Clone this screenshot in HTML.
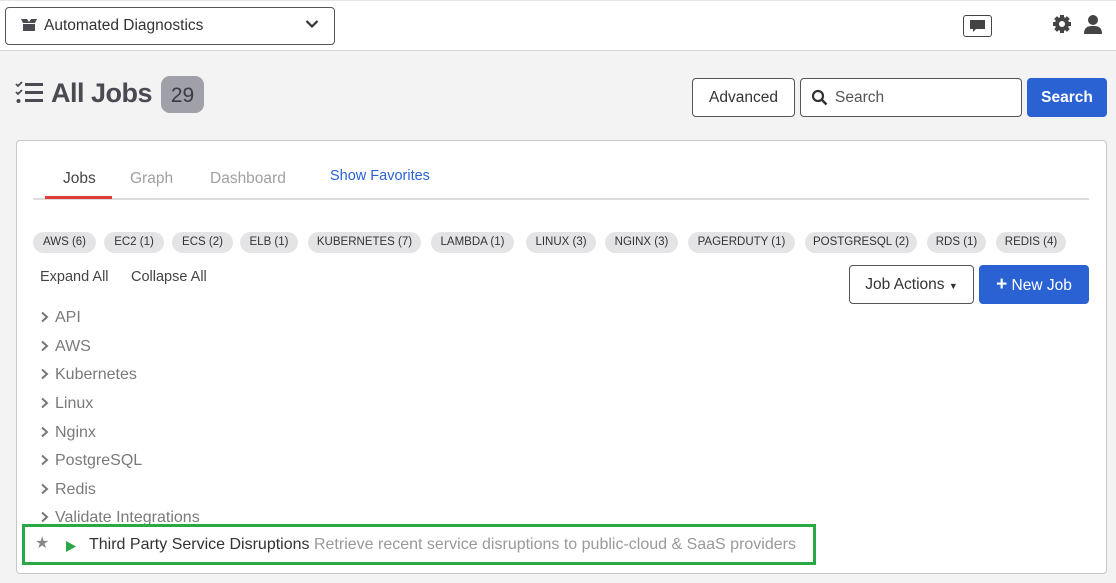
<!DOCTYPE html>
<html><head><style>
*{margin:0;padding:0;box-sizing:border-box}
body{width:1116px;height:583px;overflow:hidden;background:#f3f3f3;font-family:"Liberation Sans",sans-serif;color:#4a4a52;position:relative}
.a{position:absolute}
.top{left:0;top:0;width:1116px;height:51px;background:#fff;border-bottom:1px solid #d6d6d6;border-top:1px solid #e6e6e6}
.chip{position:absolute;top:232px;height:21px;border-radius:11px;background:#e4e4e6;font-size:11.5px;color:#333;text-align:center;line-height:21px}
.li{position:absolute;left:40px;font-size:16px;color:#7a7a7a}
.li svg{vertical-align:-1px;margin-right:5px}
</style></head><body>
<div class="a top"></div>
<div class="a" style="left:5px;top:7px;width:330px;height:38px;border:1px solid #555;border-radius:4px;background:#fff"></div>
<svg class="a" style="left:20px;top:18px" width="18" height="14" viewBox="0 0 18 14"><path d="M1 1h6l2 3 2-3h6l-2 4h-12z M3 6h12v7h-12z" fill="#4a4a52"/></svg>
<div class="a" style="left:44px;top:17px;font-size:15.5px;color:#333">Automated Diagnostics</div>
<svg class="a" style="left:305px;top:19px" width="14" height="10"><path d="M1.5 2l5.5 5.5 5.5-5.5" stroke="#333" stroke-width="2.2" fill="none"/></svg>
<div class="a" style="left:963px;top:15px;width:29px;height:22px;border:1px solid #444;border-radius:3px;background:#fff"></div>
<svg class="a" style="left:969px;top:19px" width="17" height="15"><path d="M1 1h15v9h-9l-3 3v-3h-3z" fill="#444"/></svg>
<svg class="a" style="left:1052px;top:14px" width="20" height="20" viewBox="0 0 20 20"><g fill="#444"><circle cx="10" cy="10" r="7"/><g stroke="#444" stroke-width="4"><path d="M10 1v18M1 10h18M3.6 3.6l12.8 12.8M16.4 3.6l-12.8 12.8"/></g></g><circle cx="10" cy="10" r="3" fill="#fff"/></svg>
<svg class="a" style="left:1083px;top:14px" width="20" height="20"><circle cx="10" cy="6" r="5" fill="#444"/><path d="M1 20c0-7 4-8 9-8s9 1 9 8z" fill="#444"/></svg>

<svg class="a" style="left:15px;top:80px" width="30" height="26"><g fill="#4a4a52"><path d="M1 4l2 2 4-4" stroke="#4a4a52" stroke-width="1.8" fill="none"/><path d="M1 12l2 2 4-4" stroke="#4a4a52" stroke-width="1.8" fill="none"/><circle cx="3.5" cy="21" r="2"/><rect x="10" y="3" width="18" height="3"/><rect x="10" y="11" width="18" height="3"/><rect x="10" y="19" width="18" height="3"/></g></svg>
<div class="a" style="left:51px;top:78px;font-size:27px;font-weight:bold;color:#4a4a52;letter-spacing:-0.5px">All Jobs</div>
<div class="a" style="left:161px;top:76px;width:43px;height:37px;border-radius:9px;background:#a0a0a8;font-size:21px;color:#3a3a42;text-align:center;line-height:39px">29</div>

<div class="a" style="left:692px;top:78px;width:103px;height:39px;border:1px solid #555;border-radius:4px;background:#fff;font-size:15.5px;text-align:center;line-height:38px;color:#333">Advanced</div>
<div class="a" style="left:800px;top:78px;width:222px;height:39px;border:1px solid #555;border-radius:4px;background:#fff"></div>
<svg class="a" style="left:811px;top:89px" width="17" height="17"><circle cx="7" cy="7" r="5" stroke="#333" stroke-width="2.2" fill="none"/><path d="M10.5 10.5l5 5" stroke="#333" stroke-width="2.5"/></svg>
<div class="a" style="left:835px;top:89px;font-size:15.5px;color:#555">Search</div>
<div class="a" style="left:1027px;top:78px;width:80px;height:39px;border-radius:4px;background:#2a62d4;color:#fff;font-size:15.5px;font-weight:bold;text-align:center;line-height:39px">Search</div>

<div class="a" style="left:16px;top:140px;width:1091px;height:434px;background:#fff;border:1px solid #c8c8c8;border-radius:4px"></div>
<div class="a" style="left:33px;top:198px;width:1056px;height:2px;background:#ddd"></div>
<div class="a" style="left:45px;top:196px;width:67px;height:3px;background:#e03a3a"></div>
<div class="a" style="left:63px;top:170px;font-size:15.5px;color:#444">Jobs</div>
<div class="a" style="left:130px;top:170px;font-size:15.5px;color:#a0a0a0">Graph</div>
<div class="a" style="left:210px;top:170px;font-size:15.5px;color:#a0a0a0">Dashboard</div>
<div class="a" style="left:330px;top:168px;font-size:14.5px;color:#2a62d4">Show Favorites</div>

<div class="chip" style="left:33px;width:63px">AWS (6)</div>
<div class="chip" style="left:104px;width:60px">EC2 (1)</div>
<div class="chip" style="left:172px;width:61px">ECS (2)</div>
<div class="chip" style="left:240px;width:58px">ELB (1)</div>
<div class="chip" style="left:308px;width:113px">KUBERNETES (7)</div>
<div class="chip" style="left:431px;width:83px">LAMBDA (1)</div>
<div class="chip" style="left:526px;width:70px">LINUX (3)</div>
<div class="chip" style="left:605px;width:73px">NGINX (3)</div>
<div class="chip" style="left:688px;width:107px">PAGERDUTY (1)</div>
<div class="chip" style="left:805px;width:112px">POSTGRESQL (2)</div>
<div class="chip" style="left:927px;width:59px">RDS (1)</div>
<div class="chip" style="left:996px;width:70px">REDIS (4)</div>

<div class="a" style="left:40px;top:269px;font-size:14.5px;color:#444">Expand All</div>
<div class="a" style="left:131px;top:269px;font-size:14.5px;color:#444">Collapse All</div>
<div class="a" style="left:849px;top:265px;width:125px;height:39px;border:1px solid #555;border-radius:4px;font-size:15.5px;line-height:37px;text-align:center;color:#333">Job Actions <span style="font-size:9px">▼</span></div>
<div class="a" style="left:979px;top:265px;width:110px;height:39px;border-radius:4px;background:#2a62d4;color:#fff;font-size:15.5px;line-height:39px;text-align:center"><b style="font-size:19px">+</b> New Job</div>

<div class="li" style="top:309px"><svg width="10" height="12"><path d="M2 1.5l5 4.5-5 4.5" stroke="#777" stroke-width="2" fill="none"/></svg>API</div>
<div class="li" style="top:338px"><svg width="10" height="12"><path d="M2 1.5l5 4.5-5 4.5" stroke="#777" stroke-width="2" fill="none"/></svg>AWS</div>
<div class="li" style="top:366px"><svg width="10" height="12"><path d="M2 1.5l5 4.5-5 4.5" stroke="#777" stroke-width="2" fill="none"/></svg>Kubernetes</div>
<div class="li" style="top:395px"><svg width="10" height="12"><path d="M2 1.5l5 4.5-5 4.5" stroke="#777" stroke-width="2" fill="none"/></svg>Linux</div>
<div class="li" style="top:424px"><svg width="10" height="12"><path d="M2 1.5l5 4.5-5 4.5" stroke="#777" stroke-width="2" fill="none"/></svg>Nginx</div>
<div class="li" style="top:452px"><svg width="10" height="12"><path d="M2 1.5l5 4.5-5 4.5" stroke="#777" stroke-width="2" fill="none"/></svg>PostgreSQL</div>
<div class="li" style="top:481px"><svg width="10" height="12"><path d="M2 1.5l5 4.5-5 4.5" stroke="#777" stroke-width="2" fill="none"/></svg>Redis</div>
<div class="li" style="top:509px"><svg width="10" height="12"><path d="M2 1.5l5 4.5-5 4.5" stroke="#777" stroke-width="2" fill="none"/></svg>Validate Integrations</div>

<div class="a" style="left:22px;top:524px;width:794px;height:41px;border:3px solid #2aa845;background:#fff"></div>
<div class="a" style="left:35px;top:533px;font-size:16px;color:#888">★</div>
<svg class="a" style="left:65px;top:540px" width="12" height="13"><path d="M1 1l10 5.5-10 5.5z" fill="#2aa845"/></svg>
<div class="a" style="left:89px;top:536px;font-size:16px;white-space:nowrap;color:#333">Third Party Service Disruptions <span style="color:#999">Retrieve recent service disruptions to public-cloud &amp; SaaS providers</span></div>
</body></html>
